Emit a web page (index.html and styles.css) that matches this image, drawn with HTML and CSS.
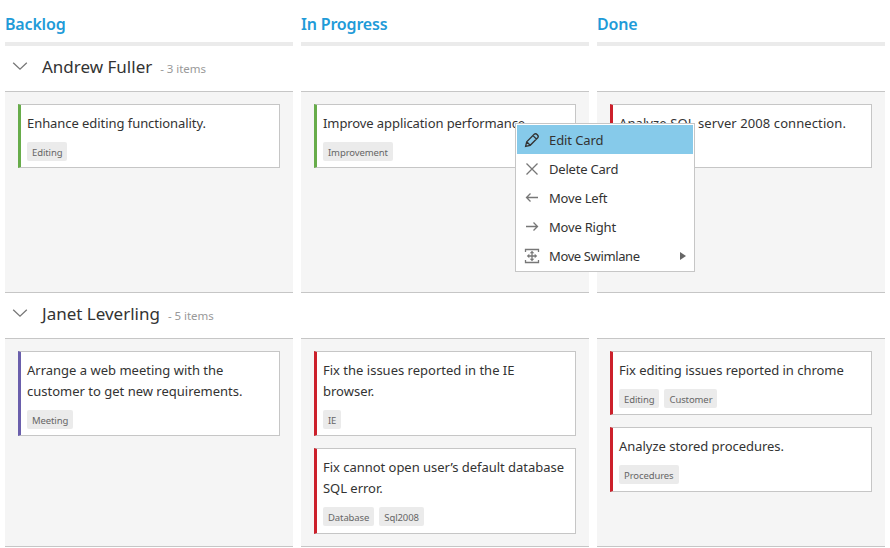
FILE: index.html
```html
<!DOCTYPE html>
<html lang="en">
<head>
<meta charset="utf-8">
<title>Kanban</title>
<link rel="stylesheet" href="styles.css">
</head>
<body>
<main class="kanban">
  <div class="row headers">
    <h2 class="column-title">Backlog</h2>
    <h2 class="column-title">In Progress</h2>
    <h2 class="column-title">Done</h2>
  </div>

  <div class="swimlane">
    <svg class="chevron" width="16" height="10" viewBox="0 0 16 10"><path d="M1.2 1.7 8 8.2l6.8-6.5"/></svg>
    <span class="name">Andrew Fuller</span><span class="count">- 3 items</span>
  </div>
  <div class="row lane lane-first">
    <section class="cell">
      <article class="card green"><p class="tight">Enhance editing functionality.</p><div class="tags"><span>Editing</span></div></article>
    </section>
    <section class="cell">
      <article class="card green"><p class="tighter">Improve application performance.</p><div class="tags"><span>Improvement</span></div></article>
    </section>
    <section class="cell">
      <article class="card red"><p class="wide">Analyze SQL server 2008 connection.</p><div class="tags"></div></article>
    </section>
  </div>

  <div class="swimlane">
    <svg class="chevron" width="16" height="10" viewBox="0 0 16 10"><path d="M1.2 1.7 8 8.2l6.8-6.5"/></svg>
    <span class="name">Janet Leverling</span><span class="count">- 5 items</span>
  </div>
  <div class="row lane lane-second">
    <section class="cell">
      <article class="card purple"><p>Arrange a web meeting with the<br>customer to get new requirements.</p><div class="tags"><span>Meeting</span></div></article>
    </section>
    <section class="cell">
      <article class="card red"><p>Fix the issues reported in the IE<br>browser.</p><div class="tags"><span>IE</span></div></article>
      <article class="card red"><p class="slight">Fix cannot open user’s default database<br>SQL error.</p><div class="tags"><span>Database</span><span>Sql2008</span></div></article>
    </section>
    <section class="cell">
      <article class="card red"><p class="slight">Fix editing issues reported in chrome</p><div class="tags"><span>Editing</span><span>Customer</span></div></article>
      <article class="card red"><p class="slight">Analyze stored procedures.</p><div class="tags"><span>Procedures</span></div></article>
    </section>
  </div>
</main>

<ul class="menu">
  <li class="active"><svg width="16" height="16" viewBox="0 0 16 16"><path d="M1.6 14.4 2.7 9.8 10.2 2.3Q11.6 1 13.3 2.7 15 4.4 13.7 5.8L6.2 13.3ZM9 3.6l3.4 3.4M2.7 9.8l3.5 3.5"/></svg><span>Edit Card</span></li>
  <li><svg width="16" height="16" viewBox="0 0 16 16"><path d="m2.5 2.5 11 11m0-11-11 11"/></svg><span class="menu-tight">Delete Card</span></li>
  <li><svg width="16" height="16" viewBox="0 0 16 16"><path d="M14 7.5H2.5M6.5 3.5l-4 4 4 4"/></svg><span class="menu-tight">Move Left</span></li>
  <li><svg width="16" height="16" viewBox="0 0 16 16"><path d="M2 7.5h11.5M9.5 3.5l4 4-4 4"/></svg><span class="menu-tight">Move Right</span></li>
  <li><svg width="16" height="16" viewBox="0 0 16 16"><path d="M1.5 4V1.5h13V4M1.5 12v2.5h13V12M8 4v8M4 8h8"/><path class="fill" d="m8 2.8 2.3 2.5H5.7zM8 13.2l2.3-2.5H5.7zM2.8 8l2.5-2.3v4.6zM13.2 8l-2.5-2.3v4.6z"/></svg><span class="menu-tighter">Move Swimlane</span><i class="arrow"></i></li>
</ul>
</body>
</html>
```
FILE: styles.css
```css
* { box-sizing: border-box; }
body {
  margin: 0;
  height: 548px;
  overflow: hidden;
  background: #fff;
  color: #333;
  font-family: "Noto Sans", "Open Sans", sans-serif;
  font-size: 13px;
}
.kanban { width: 880px; margin-left: 5px; }
.row { display: grid; grid-template-columns: repeat(3, 288px); gap: 8px; }
.column-title {
  height: 46px;
  margin: 0;
  padding-top: 12px;
  border-bottom: 4px solid #ebebeb;
  color: #1f9bd8;
  font-size: 16px;
  font-weight: 600;
  line-height: 24px;
  letter-spacing: -0.18px;
}
.swimlane { display: flex; align-items: baseline; height: 45px; padding: 8px 0 0 7px; }
.chevron { width: 16px; height: 10px; margin-right: 14px; align-self: flex-start; margin-top: 7px; }
.chevron path { fill: none; stroke: #777; stroke-width: 1.3; }
.name { font-size: 17px; line-height: 26px; }
.count { margin-left: 8px; color: #999; font-size: 11.5px; letter-spacing: -0.05px; }
.cell {
  display: flex;
  flex-direction: column;
  gap: 12px;
  padding: 12px 13px 0;
  border-top: 1px solid #c6c6c6;
  border-bottom: 1px solid #c6c6c6;
  background: #f5f5f5;
}
.lane-first { height: 202px; }
.lane-second { height: 209px; }
.card {
  padding: 8px 0 6.4px 6px;
  border: 1px solid #c6c6c6;
  border-left: 3px solid;
  background: #fff;
}
.green { border-left-color: #67ac4a; }
.red { border-left-color: #cc202b; }
.purple { border-left-color: #6a5fac; }
.card p { margin: 0; line-height: 21px; white-space: nowrap; }
.card .slight { letter-spacing: -0.03px; }
.card .tight { letter-spacing: -0.06px; }
.card .tighter { letter-spacing: -0.09px; }
.card .wide { letter-spacing: 0.09px; }
.tags { display: flex; gap: 5px; margin-top: 8px; height: 19px; }
.tags span {
  padding: 0 5px;
  border-radius: 2px;
  background: #ebebeb;
  color: #666;
  font-size: 9.5px;
  line-height: 21px;
  letter-spacing: -0.1px;
}
.menu {
  position: absolute;
  top: 123px;
  left: 515px;
  width: 180px;
  height: 149px;
  margin: 0;
  padding: 1px;
  border: 1px solid #c6c6c6;
  background: #fff;
  list-style: none;
}
.menu li { display: flex; align-items: center; height: 29px; padding: 0 7px; letter-spacing: -0.1px; }
.menu svg { margin-right: 9px; }
.menu path { fill: none; stroke: #777; stroke-width: 1.3; }
.menu .fill { fill: #777; stroke: none; }
.menu .active { background: #86caea; }
.menu .active path { stroke: #333; stroke-width: 1.3; }
.menu-tight { letter-spacing: -0.2px; }
.menu-tighter { letter-spacing: -0.38px; }
.arrow { margin-left: auto; border: 4px solid transparent; border-left: 6px solid #666; border-right: 0; }
```
